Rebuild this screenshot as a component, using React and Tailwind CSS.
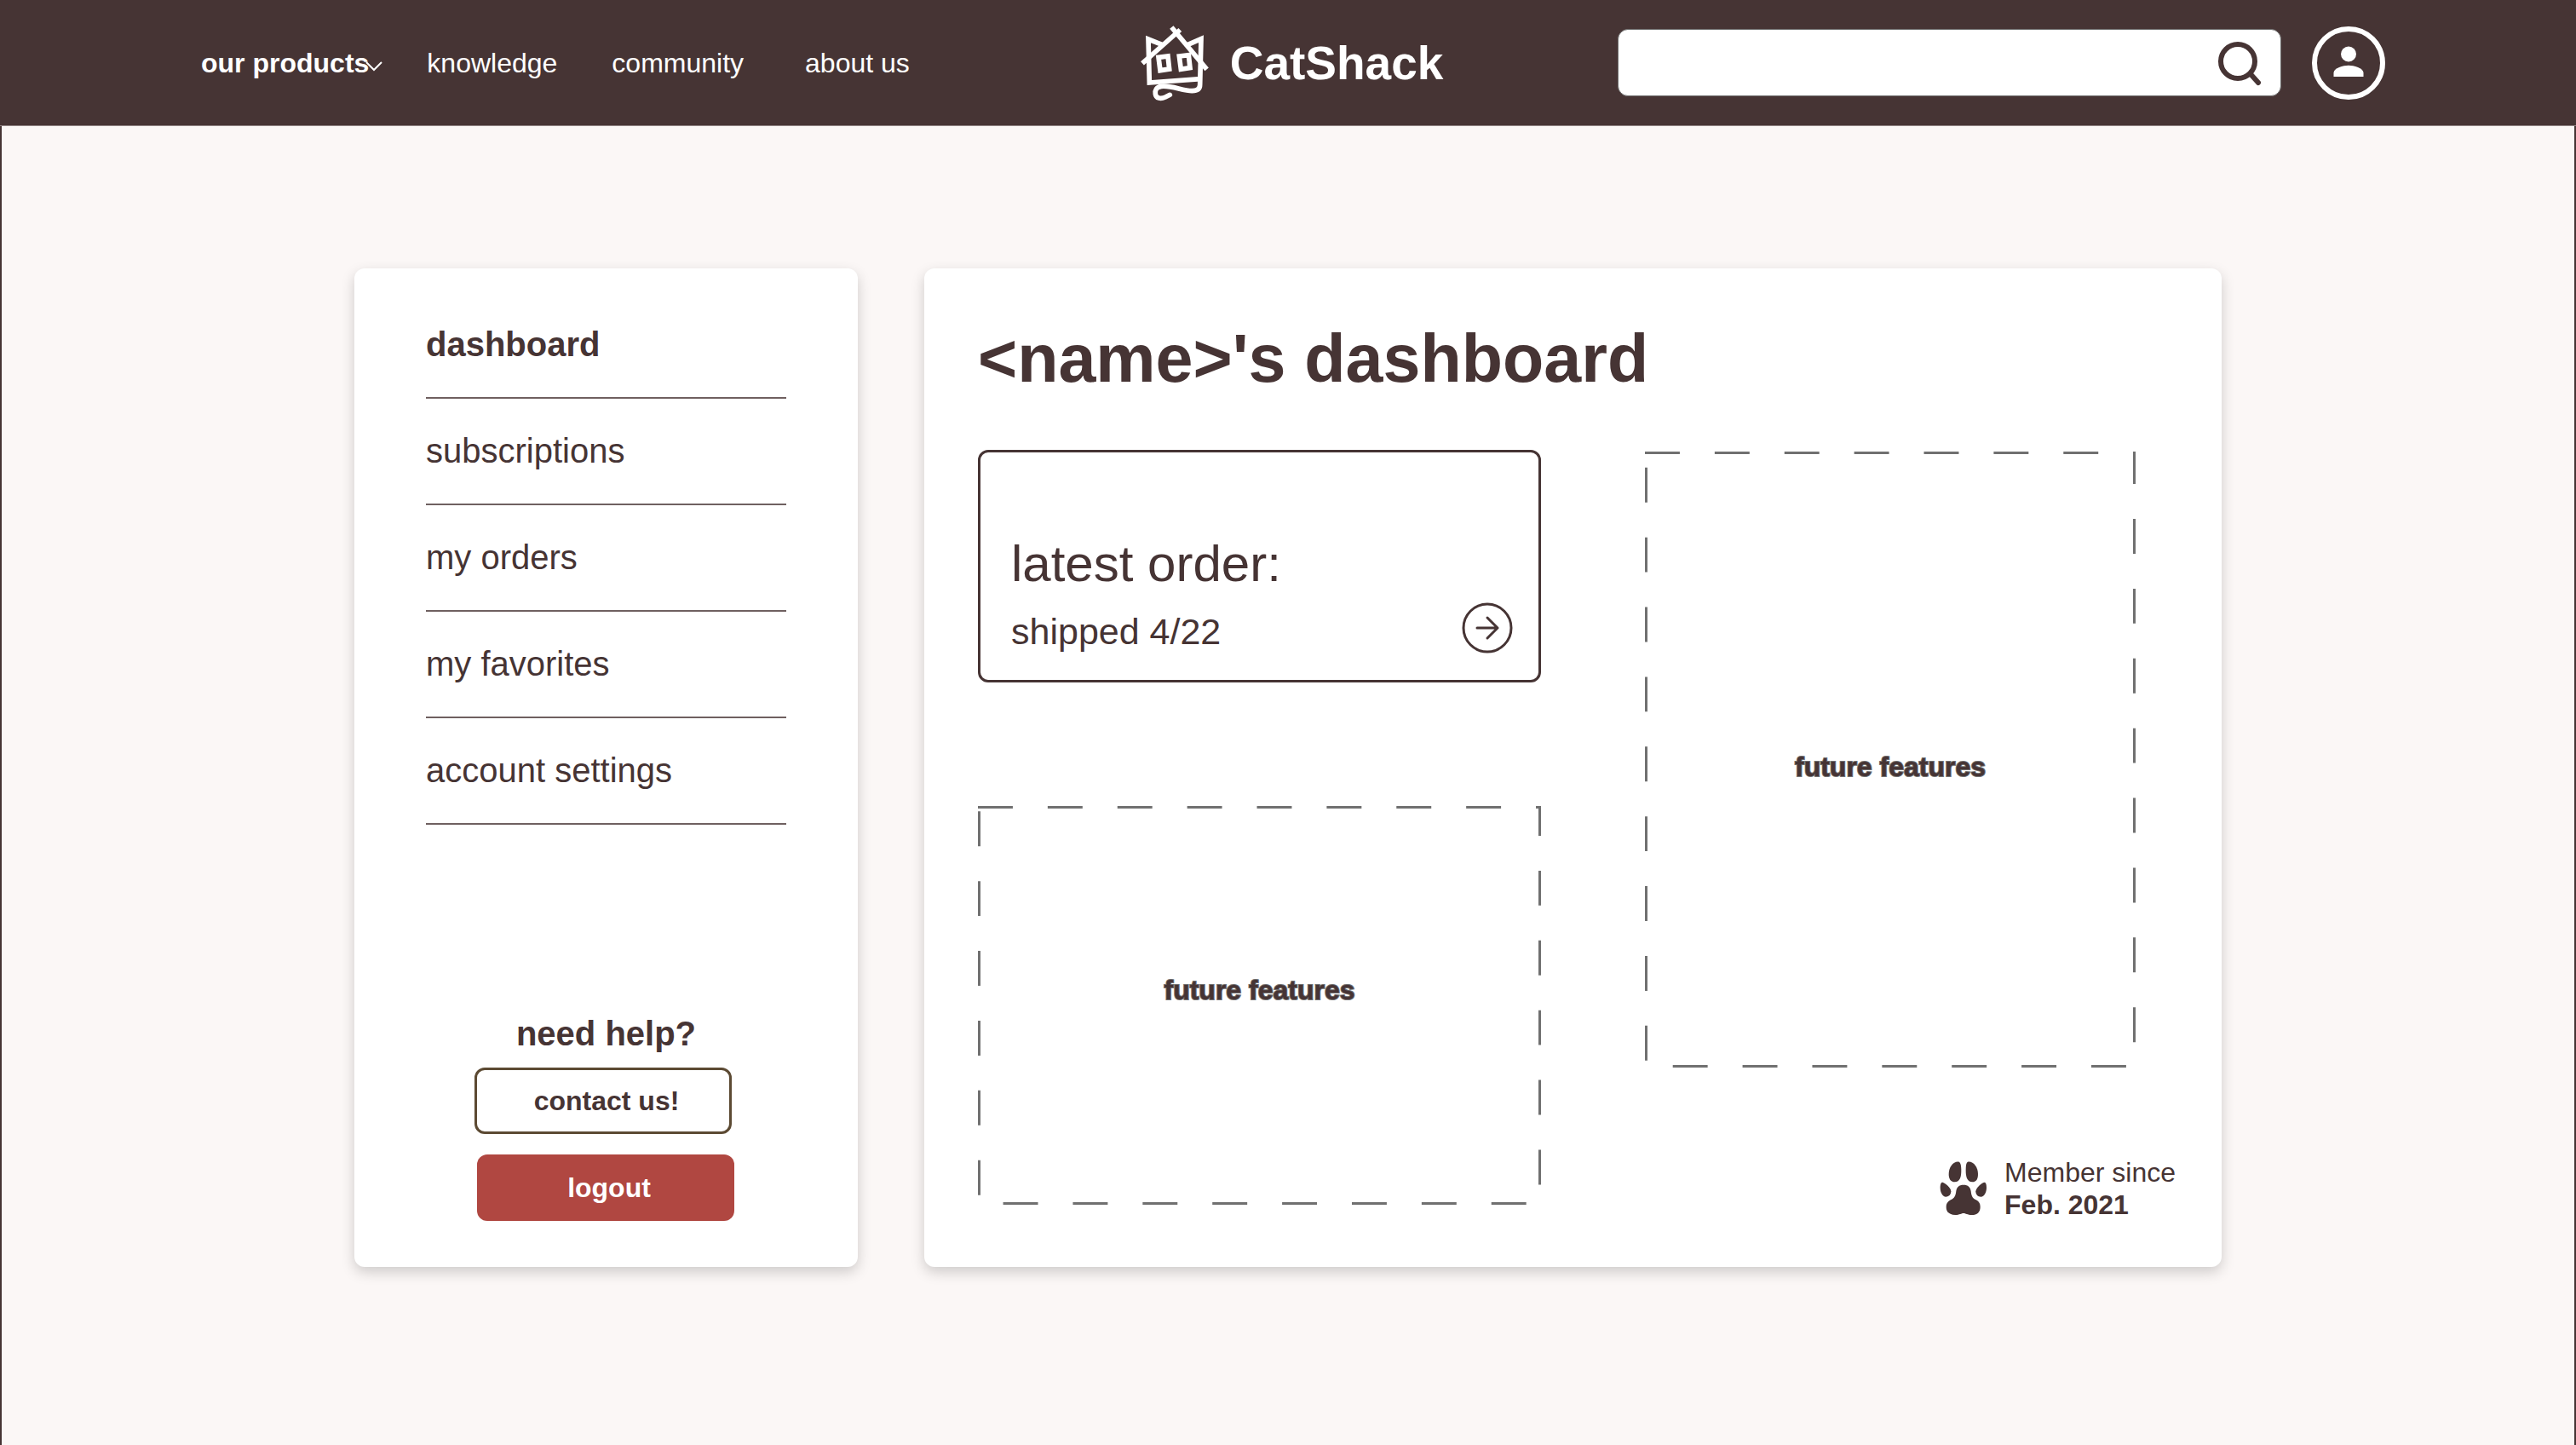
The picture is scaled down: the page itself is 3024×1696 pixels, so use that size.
const navLink = "text-[32px] leading-[38px] text-white";

function CatShackLogo() {
  return (
    <svg className="h-[92px] w-[82px] shrink-0" viewBox="54 48 246 276" fill="none" stroke="#fff" aria-hidden="true">
      <path d="M134 122 L84 102 L88 255 L268 242" strokeWidth="17" />
      <path d="M222 122 L270 101 L266 262 C266 278 256 284 238 284 C205 284 165 264 130 268 C112 270 107 282 109 295 C111 311 128 313 144 306 L160 298" strokeWidth="17" strokeLinecap="round" />
      <path d="M63 187 L196 69" strokeWidth="17" />
      <path d="M290 208 L166 60" strokeWidth="17" />
      <path d="M120 166 L153 162 L158 207 L126 212 Z" strokeWidth="17" />
      <path d="M193 162 L226 158 L231 203 L199 208 Z" strokeWidth="17" />
    </svg>
  );
}

function Header() {
  return (
    <header className="grid h-[148px] grid-cols-[1fr_auto_1fr] items-center border-b border-[#8f8282] bg-[#463434] pr-[224px] pl-[236px]">
      <nav aria-label="Main" className="flex items-center whitespace-nowrap">
        <button type="button" className="flex items-center text-[32px] leading-[38px] font-bold text-white">
          our products
          <svg className="-ml-1 mt-2 h-3 w-5" viewBox="0 0 20 12" fill="none" stroke="#fff" strokeWidth="2" aria-hidden="true">
            <path d="M1 1 L10 10 L19 1" />
          </svg>
        </button>
        <a href="#knowledge" className={`${navLink} ml-13`}>knowledge</a>
        <a href="#community" className={`${navLink} ml-16`}>community</a>
        <a href="#about" className={`${navLink} ml-18`}>about us</a>
      </nav>

      <a href="#home" className="flex items-center gap-6 pr-1 text-[55px] leading-[64px] font-bold text-white">
        <CatShackLogo />
        CatShack
      </a>

      <div className="ml-[201px] flex items-center gap-9">
        <form role="search" className="flex h-[79px] min-w-0 flex-1 items-center rounded-xl border border-[#707070] bg-white pr-[21px]" onSubmit={(e) => e.preventDefault()}>
          <input type="search" aria-label="Search" className="h-full min-w-0 flex-1 rounded-xl bg-transparent px-6 text-[32px] text-[#463434] outline-none" />
          <button type="submit" aria-label="Search">
            <svg className="size-[54px]" viewBox="0 0 54 54" fill="none" stroke="#463434" aria-hidden="true">
              <circle cx="25" cy="25" r="20" strokeWidth="6" />
              <path d="M40 40 L49 50" strokeWidth="6" strokeLinecap="round" />
            </svg>
          </button>
        </form>
        <button type="button" aria-label="Account" className="shrink-0">
          <svg className="size-[86px]" viewBox="0 0 86 86" aria-hidden="true">
            <circle cx="43" cy="43" r="40" fill="none" stroke="#fff" strokeWidth="6" />
            <circle cx="43" cy="32.5" r="9" fill="#fff" />
            <path d="M25.5 59 V54.5 C25.5 48.5 37 45.7 43 45.7 S60.5 48.5 60.5 54.5 V59 Z" fill="#fff" />
          </svg>
        </button>
      </div>
    </header>
  );
}

const sections = ["dashboard", "subscriptions", "my orders", "my favorites", "account settings"];

function Sidebar() {
  return (
    <aside className="flex w-[591px] shrink-0 flex-col rounded-xl bg-white px-[84px] pt-7 pb-[54px] shadow-[0_6px_16px_rgba(0,0,0,0.18)]">
      <nav aria-label="Account">
        <ul>
          {sections.map((name, i) => (
            <li key={name} className="border-b-2 border-[#6f6060] pt-[37px] pb-[38px]">
              <a
                href={`#${name.replace(" ", "-")}`}
                aria-current={i === 0 ? "page" : undefined}
                className="block text-[40px] leading-[48px] aria-[current=page]:font-bold"
              >
                {name}
              </a>
            </li>
          ))}
        </ul>
      </nav>
      <div className="mx-auto mt-auto flex w-[309px] flex-col pr-1">
        <h2 className="pl-1 text-center text-[40px] leading-[48px] font-bold">need help?</h2>
        <button type="button" className="mt-4 h-[78px] w-[302px] self-start rounded-xl border-3 border-[#5c4a33] pl-2 text-[32px] leading-[38px] font-bold">
          contact us!
        </button>
        <button type="button" className="mt-6 h-[78px] w-[302px] self-end rounded-xl bg-[#b04741] pl-2 text-[32px] leading-[38px] font-bold text-white">
          logout
        </button>
      </div>
    </aside>
  );
}

function FutureFeatures({ className }) {
  return (
    <section className={`relative flex items-center justify-center ${className}`}>
      <svg className="absolute inset-0 size-full overflow-hidden" fill="none" aria-hidden="true">
        <rect width="100%" height="100%" stroke="#707070" strokeWidth="6" strokeDasharray="40.94" />
      </svg>
      <h3 className="text-[32px] leading-[38px] font-bold [-webkit-text-stroke:2px_#707070] [paint-order:stroke_fill]">future features</h3>
    </section>
  );
}

function LatestOrder() {
  return (
    <section className="flex items-end justify-between rounded-xl border-3 border-[#463434] pt-[95px] pr-[30px] pb-[31px] pl-9">
      <div>
        <h2 className="text-[60px] leading-[72px]">latest order:</h2>
        <p className="mt-[17px] text-[43px] leading-[52px]">shipped 4/22</p>
      </div>
      <button type="button" aria-label="View latest order">
        <svg className="size-[60px]" viewBox="0 0 60 60" fill="none" stroke="#463434" strokeWidth="3" strokeLinecap="round" strokeLinejoin="round" aria-hidden="true">
          <circle cx="30" cy="30" r="28" />
          <path d="M18 30 H42 M30 18 L42 30 L30 42" />
        </svg>
      </button>
    </section>
  );
}

function PawIcon() {
  return (
    <svg className="h-[64px] w-[56px]" viewBox="112 97 168 192" fill="#463434" aria-hidden="true">
      <path d="M180 99 C186 101 188 115 188 130 C188 150 184 170 165 170 C150 170 144 158 144 142 C144 118 160 96 180 99 Z" />
      <path d="M211 99 C205 101 204 115 204 130 C204 150 208 170 227 170 C242 170 247 158 247 142 C247 118 231 96 211 99 Z" />
      <path d="M120 171 C128 170 152 190 152 203 C152 215 144 222 134 222 C122 222 114 206 114 190 C114 180 116 172 120 171 Z" />
      <path d="M271 171 C263 170 239 190 239 203 C239 215 247 222 257 222 C269 222 277 206 277 190 C277 180 275 172 271 171 Z" />
      <path d="M196 180 C212 180 220 188 222 202 C224 218 226 226 240 233 C251 239 255 246 255 258 C255 276 244 286 225 286 C210 286 203 280 196 280 C189 280 182 286 167 286 C147 286 135 276 135 258 C135 246 140 239 151 233 C165 226 168 218 170 202 C172 188 180 180 196 180 Z" />
    </svg>
  );
}

export default function App() {
  return (
    <div className="flex min-h-screen flex-col bg-[#fbf7f6] font-['Liberation_Sans',Arial,sans-serif] text-[#463434]">
      <Header />
      <main className="flex flex-1 items-start border-x-2 border-[#463434] px-[414px] pt-[167px] pb-[167px]">
        <div className="flex w-full items-stretch gap-[78px]">
          <Sidebar />
          <section className="min-w-0 flex-1 rounded-xl bg-white pt-[58px] pb-[54px] pl-[63px] shadow-[0_6px_16px_rgba(0,0,0,0.18)]">
            <h1 className="text-[79px] leading-[96px] font-bold">{"<name>'s dashboard"}</h1>
            <div className="mt-[59px] grid grid-cols-[661fr_677fr] items-start gap-[122px]">
              <div className="flex flex-col gap-[145px]">
                <LatestOrder />
                <FutureFeatures className="h-[468px] pb-9" />
              </div>
              <div className="flex flex-col">
                <FutureFeatures className="mt-0.5 mr-[101px] h-[723px] pt-4" />
                <div className="mt-[104px] mr-[54px] flex items-center gap-5 self-end">
                  <PawIcon />
                  <p className="text-[32px] leading-[38px]">
                    Member since
                    <strong className="block">Feb. 2021</strong>
                  </p>
                </div>
              </div>
            </div>
          </section>
        </div>
      </main>
    </div>
  );
}
